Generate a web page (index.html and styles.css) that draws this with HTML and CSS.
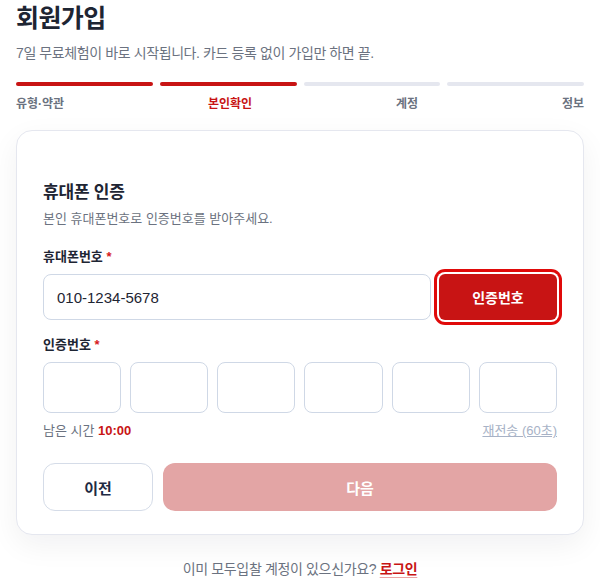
FILE: index.html
```html
<!DOCTYPE html>
<html lang="ko">
<head>
<meta charset="utf-8">
<link rel="stylesheet" href="styles.css">
</head>
<body>
<div class="page">
  <h1 class="title">회원가입</h1>
  <p class="lead">7일 무료체험이 바로 시작됩니다. 카드 등록 없이 가입만 하면 끝.</p>
  <div class="progress">
    <span class="bar on"></span>
    <span class="bar on"></span>
    <span class="bar"></span>
    <span class="bar"></span>
  </div>
  <div class="steps">
    <span class="step">유형·약관</span>
    <span class="step active">본인확인</span>
    <span class="step">계정</span>
    <span class="step">정보</span>
  </div>
  <div class="card">
    <h2 class="card-title">휴대폰 인증</h2>
    <p class="card-desc">본인 휴대폰번호로 인증번호를 받아주세요.</p>
    <div class="label">휴대폰번호 <span class="req">*</span></div>
    <div class="phone-row">
      <div class="input">010-1234-5678</div>
      <button class="send">인증번호</button>
    </div>
    <div class="label label2">인증번호 <span class="req">*</span></div>
    <div class="otp">
      <div class="box"></div><div class="box"></div><div class="box"></div>
      <div class="box"></div><div class="box"></div><div class="box"></div>
    </div>
    <div class="timer-row">
      <span class="timer">남은 시간 <b>10:00</b></span>
      <span class="resend">재전송 (60초)</span>
    </div>
    <div class="actions">
      <button class="prev">이전</button>
      <button class="next">다음</button>
    </div>
  </div>
  <p class="footer">이미 모두입찰 계정이 있으신가요? <a class="login">로그인</a></p>
</div>
</body>
</html>
```
FILE: styles.css
```css
* { box-sizing: border-box; }
html, body { margin: 0; padding: 0; background: #fff; }
body {
  font-family: "Liberation Sans", "Noto Sans CJK KR", sans-serif;
  color: #1f2937;
}
.page { padding: 0 16px; }
.title {
  margin: 0;
  font-size: 25px;
  line-height: 36px;
  font-weight: 700;
  color: #1e2533;
  letter-spacing: -0.6px;
}
.lead {
  margin: 6px 0 0;
  font-size: 14px;
  line-height: 22px;
  color: #6b7280;
  letter-spacing: -0.4px;
}
.progress {
  margin-top: 18px;
  display: flex;
  gap: 7px;
}
.bar {
  flex: 1;
  height: 4px;
  border-radius: 2px;
  background: #e5e7ef;
}
.bar.on { background: #c81414; }
.steps {
  margin-top: 10px;
  display: flex;
  justify-content: space-between;
  font-size: 12px;
  line-height: 16px;
  font-weight: 700;
  color: #6b7280;
}
.step.active { color: #c81414; }
.card {
  margin-top: 18px;
  border: 1px solid #e5e7ef;
  border-radius: 16px;
  background: #fff;
  padding: 49px 26px 23px;
  box-shadow: 0 10px 30px rgba(15, 23, 42, 0.06);
}
.card-title {
  margin: 0;
  font-size: 17px;
  line-height: 26px;
  font-weight: 700;
  color: #1e2533;
  letter-spacing: -0.2px;
}
.card-desc {
  margin: 3px 0 0;
  font-size: 13px;
  line-height: 20px;
  color: #6b7280;
}
.label {
  margin-top: 18px;
  font-size: 13px;
  line-height: 20px;
  font-weight: 700;
  color: #1e2533;
}
.label2 { margin-top: 15px; }
.req { color: #d61a1a; }
.phone-row {
  margin-top: 7px;
  display: flex;
  gap: 8px;
}
.input {
  flex: 1;
  height: 46px;
  border: 1px solid #cfd8e6;
  border-radius: 8px;
  padding: 0 13px;
  display: flex;
  align-items: center;
  font-size: 15px;
  color: #1e2533;
}
.send {
  width: 118px;
  height: 46px;
  border: 0;
  border-radius: 6px;
  background: #c81414;
  color: #fff;
  font-family: inherit;
  font-size: 14px;
  font-weight: 700;
  box-shadow: 0 0 0 2px #fff, 0 0 0 5px #e00a0a;
}
.otp {
  margin-top: 7px;
  display: grid;
  grid-template-columns: repeat(6, 1fr);
  gap: 9px;
}
.box {
  height: 51px;
  border: 1px solid #cfd8e6;
  border-radius: 8px;
}
.timer-row {
  margin-top: 8px;
  display: flex;
  justify-content: space-between;
  font-size: 13px;
  line-height: 20px;
}
.timer { color: #6b7280; }
.timer b { color: #c81414; font-weight: 700; }
.resend {
  color: #a7b2c6;
  text-decoration: underline;
}
.actions {
  margin-top: 22px;
  display: flex;
  gap: 10px;
}
.prev, .next {
  height: 48px;
  border-radius: 12px;
  font-family: inherit;
  font-size: 15px;
  font-weight: 700;
}
.prev {
  width: 110px;
  border: 1px solid #d5dce8;
  background: #fff;
  color: #1e2a44;
}
.next {
  flex: 1;
  border: 0;
  background: #e3a5a5;
  color: #fff;
}
.footer {
  margin: 24px 0 0;
  text-align: center;
  font-size: 14px;
  line-height: 20px;
  color: #6b7280;
  letter-spacing: -0.35px;
}
.login {
  color: #c81414;
  font-weight: 700;
  text-decoration: underline;
  text-decoration-color: #eba3a3;
  text-underline-offset: 3px;
}
```
